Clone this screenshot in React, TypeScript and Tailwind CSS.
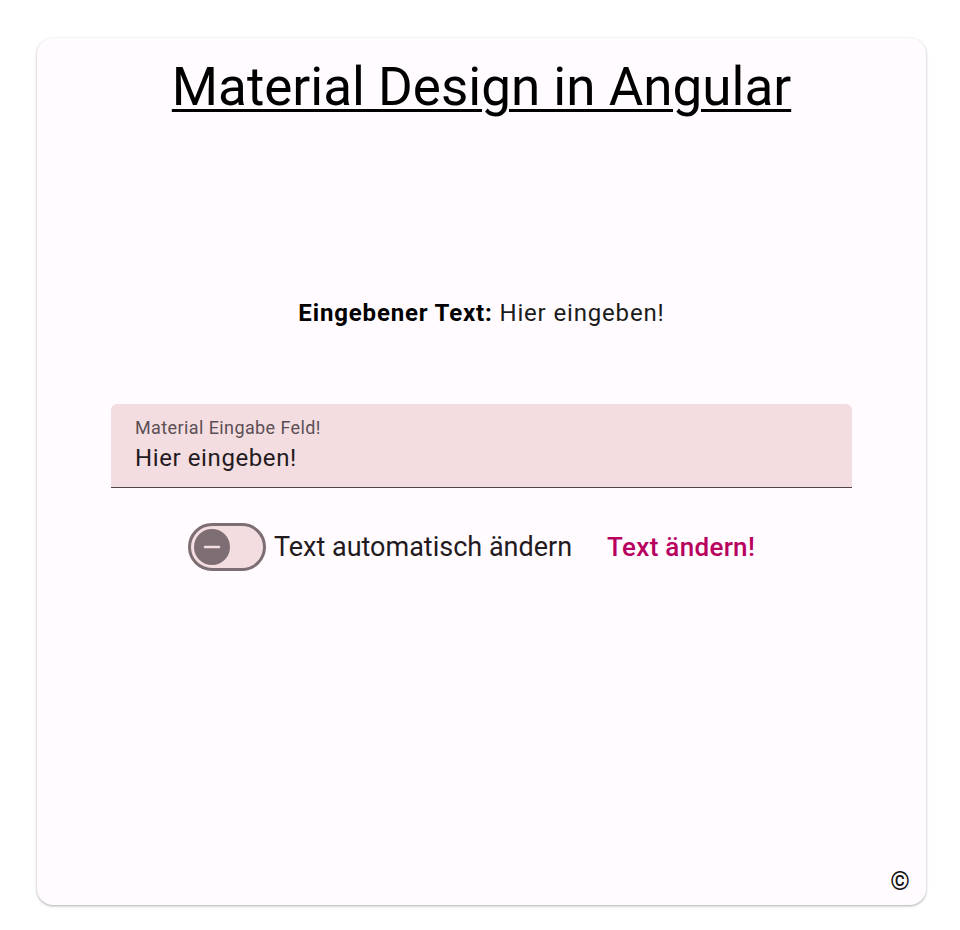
import { Minus } from "lucide-react"

export default function App() {
    return (
        <div className="min-h-[930px] bg-white pt-[38px] pl-[37px]" style={{ fontFamily: "Roboto, 'Noto Sans', sans-serif" }}>
            <div className="w-[889px] h-[867px] bg-[#fffbff] rounded-[16px] shadow-[0_1px_3px_rgba(0,0,0,0.25),0_1px_2px_rgba(0,0,0,0.1)] flex flex-col items-center pt-[17px] pb-[8px] px-[74px]">
                <h1 className="text-[53px] leading-[64px] font-normal text-black underline underline-offset-[4px] decoration-[3px]">
                    Material Design in Angular
                </h1>

                <p className="mt-[178px] text-[24px] leading-[32px] tracking-[0.84px] text-[#1b1b1b]">
                    <span className="font-bold text-black">Eingebener Text:</span> Hier eingeben!
                </p>

                <div className="mt-[75px] w-full h-[84px] bg-[#f3dde0] rounded-t-[6px] border-b-[1.5px] border-[#50434a] px-[24px] pt-[12px] flex flex-col">
                    <span className="text-[18px] leading-[24px] tracking-[0.4px] text-[#5c4f55]">Material Eingabe Feld!</span>
                    <span className="text-[24px] leading-[36px] tracking-[0.6px] text-[#231a1e]">Hier eingeben!</span>
                </div>

                <div className="mt-[35px] pr-[20px] flex items-center">
                    <div className="w-[78px] h-[48px] rounded-full border-[3px] border-[#7d6e73] bg-[#f3dde0] flex items-center pl-[3px]">
                        <div className="w-[36px] h-[36px] rounded-full bg-[#7d6e73] flex items-center justify-center">
                            <Minus className="size-[24px] text-[#f3dde0]" strokeWidth={2.5} />
                        </div>
                    </div>
                    <span className="ml-[8px] text-[27px] text-[#231a1e]">Text automatisch ändern</span>
                    <button className="ml-[35px] text-[26px] tracking-[0.3px] font-medium text-[#b8005f]">Text ändern!</button>
                </div>

                <div className="mt-auto self-end mr-[-58px] text-[25px] leading-[30px] font-bold text-[#111]">©</div>
            </div>
        </div>
    )
}
